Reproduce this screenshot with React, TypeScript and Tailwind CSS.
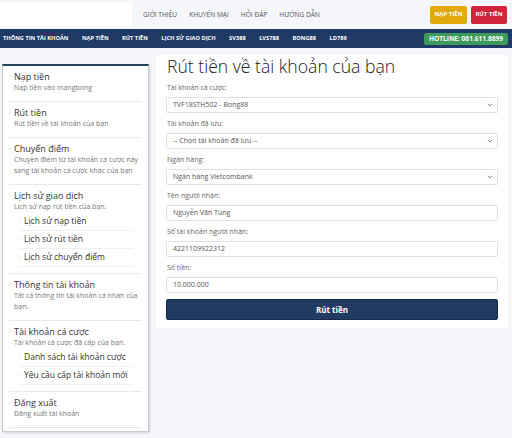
import React from "react";

const font = { fontFamily: '"Open Sans", "Noto Sans", sans-serif' };

const topLinks = ["GIỚI THIỆU", "KHUYẾN MẠI", "HỎI ĐÁP", "HƯỚNG DẪN"];
const navItems = ["THÔNG TIN TÀI KHOẢN", "NẠP TIỀN", "RÚT TIỀN", "LỊCH SỬ GIAO DỊCH", "SV388", "LVS788", "BONG88", "LD789"];

type Group = { title: string; desc: string[]; subs?: string[] };

const groups: Group[] = [
  { title: "Nạp tiền", desc: ["Nạp tiền vào mangbong"] },
  { title: "Rút tiền", desc: ["Rút tiền về tài khoản của bạn"] },
  { title: "Chuyển điểm", desc: ["Chuyển điểm từ tài khoản cá cược này", "sang tài khoản cá cược khác của bạn"] },
  {
    title: "Lịch sử giao dịch",
    desc: ["Lịch sử nạp rút tiền của bạn."],
    subs: ["Lịch sử nạp tiền", "Lịch sử rút tiền", "Lịch sử chuyển điểm"],
  },
  { title: "Thông tin tài khoản", desc: ["Tất cả thông tin tài khoản cá nhân của", "bạn."] },
  {
    title: "Tài khoản cá cược",
    desc: ["Tài khoản cá cược đã cấp của bạn."],
    subs: ["Danh sách tài khoản cược", "Yêu cầu cấp tài khoản mới"],
  },
  { title: "Đăng xuất", desc: ["Đăng xuất tài khoản"] },
];

const fields = [
  { label: "Tài khoản cá cược:", value: "TVF18STH502 - Bong88", select: true },
  { label: "Tài khoản đã lưu:", value: "-- Chọn tài khoản đã lưu --", select: true },
  { label: "Ngân hàng:", value: "Ngân hàng Vietcombank", select: true },
  { label: "Tên người nhận:", value: "Nguyễn Văn Tùng", select: false },
  { label: "Số tài khoản người nhận:", value: "4221109922312", select: false },
  { label: "Số tiền:", value: "10.000.000", select: false },
];

function Chevron() {
  return (
    <svg width="6" height="4" viewBox="0 0 6 4" className="shrink-0">
      <path d="M0.8 0.8 L3 3 L5.2 0.8" fill="none" stroke="#777" strokeWidth="0.9" />
    </svg>
  );
}

function SideGroup({ g }: { g: Group }) {
  return (
    <div className="border-b border-[#e6e9ec] pt-[5px] pb-[8px]" style={g.subs ? { paddingBottom: 6 } : undefined}>
      <div className="flex items-center leading-[11px]">
        <span className="w-[5px] text-[6px] text-[#c8c8c8]">›</span>
        <span className="text-[9px] text-[#333]">{g.title}</span>
      </div>
      {g.desc.map((d) => (
        <div key={d} className="pl-[5px] text-[7px] leading-[11px] text-[#777]">
          {d}
        </div>
      ))}
      {g.subs && (
        <div className="mt-[1px] pl-[11px] pr-[9px]">
          {g.subs.map((s) => (
            <div key={s} className="flex h-[18px] items-center border-b border-[#eef0f2]">
              <span className="w-[4px] text-[6px] text-[#c8c8c8]">›</span>
              <span className="text-[8.5px] text-[#333]">{s}</span>
            </div>
          ))}
        </div>
      )}
    </div>
  );
}

export default function App() {
  return (
    <div className="h-[438px] w-[512px] overflow-hidden bg-[#f4f6f9]" style={font}>
      {/* top header */}
      <div className="flex h-[29px] items-center">
        <div className="h-[25px] w-[132px] bg-white" />
        <div className="ml-[11px] flex items-center gap-[12px] text-[6.6px] text-[#555]">
          {topLinks.map((t) => (
            <span key={t}>{t}</span>
          ))}
        </div>
        <div className="ml-auto mr-[5px] flex gap-[4px]">
          <div className="flex h-[18px] w-[37px] items-center justify-center rounded-[2px] bg-[#e1a90c] text-[6px] font-bold text-white">
            NẠP TIỀN
          </div>
          <div className="flex h-[18px] w-[36px] items-center justify-center rounded-[2px] bg-[#d1233a] text-[6px] font-bold text-white">
            RÚT TIỀN
          </div>
        </div>
      </div>

      {/* navy bar */}
      <div className="flex h-[19px] items-center bg-[#1f3a66] pl-[3px] pr-[4px]">
        <div className="flex items-center gap-[13.5px] text-[5.7px] font-bold text-white">
          {navItems.map((n) => (
            <span key={n}>{n}</span>
          ))}
        </div>
        <div className="ml-auto flex h-[12px] w-[84px] items-center justify-center rounded-[2px] bg-[#3b9a5c] text-[6.6px] font-bold text-white">
          HOTLINE: 081.611.8899
        </div>
      </div>

      <div className="flex items-start gap-[7px] pl-[2px]">
        {/* sidebar */}
        <div className="mt-[16px] h-[368px] w-[147px] border border-t-2 border-[#c3ccd3] border-t-[#1d4658] bg-white px-[6px] shadow-[1px_1px_2px_rgba(0,0,0,0.15)]">
          {groups.map((g) => (
            <SideGroup key={g.title} g={g} />
          ))}
        </div>

        {/* main card */}
        <div className="mt-[7px] h-[273px] w-[352px] bg-white px-[10px]">
          <h1 className="pl-[1px] text-[17.6px] font-light leading-[22px] text-[#222]">Rút tiền về tài khoản của bạn</h1>
          <div className="mt-[6px]">
            {fields.map((f) => (
              <div key={f.label} className="mb-[6px]">
                <div className="pl-[1px] text-[7px] leading-[10px] text-[#666]">{f.label}</div>
                <div className="mt-[4px] flex h-[16px] items-center rounded-[2px] border border-[#dde1e5] bg-white pl-[6px] pr-[4px] text-[7px] text-[#555]">
                  <span>{f.value}</span>
                  {f.select && (
                    <span className="ml-auto">
                      <Chevron />
                    </span>
                  )}
                </div>
              </div>
            ))}
            <div className="flex h-[21px] items-center justify-center rounded-[2px] border border-[#172c4d] bg-[#213b63] text-[8px] font-bold text-white">
              Rút tiền
            </div>
          </div>
        </div>
      </div>
    </div>
  );
}
